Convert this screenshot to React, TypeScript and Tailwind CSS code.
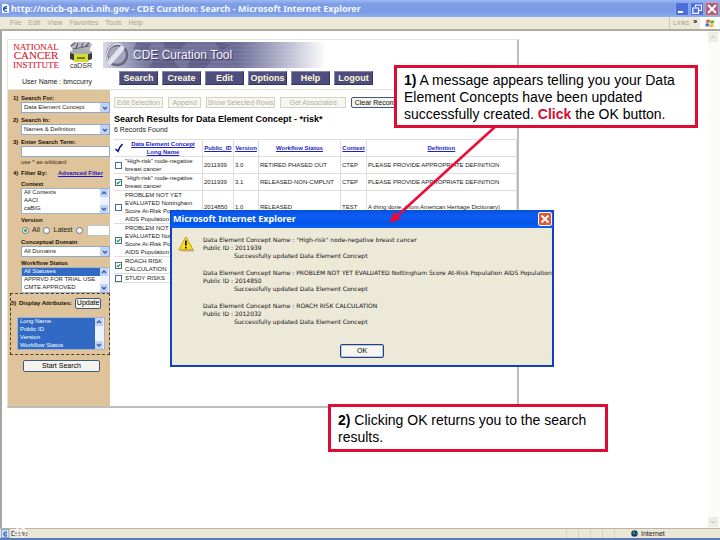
import React from "react";

const sans = "font-['Liberation_Sans',Arial,sans-serif]";
const caption = "font-['Noto_Sans','Open_Sans',sans-serif] font-bold";

function Chevron({ up = false, className = "" }: { up?: boolean; className?: string }) {
  return (
    <svg viewBox="0 0 8 8" className={`size-2 ${className}`} aria-hidden="true">
      <path d={up ? "M2 5 L4 3 L6 5" : "M2 3 L4 5 L6 3"} fill="none" stroke="#3d5a94" strokeWidth="1.4" />
    </svg>
  );
}

function DropDown({ id, value }: { id: string; value: string }) {
  return (
    <div className="flex h-[11px] border border-[#8fa9c8] bg-white">
      <select id={id} className="min-w-0 flex-1 appearance-none bg-white pl-0.5 text-[6px] leading-[9px] text-[#222]">
        <option>{value}</option>
      </select>
      <span className="flex w-[9px] items-center justify-center bg-[#c1d3fb]">
        <Chevron />
      </span>
    </div>
  );
}

function ListBox({
  id,
  label,
  items,
  selected,
  className,
}: {
  id: string;
  label?: string;
  items: string[];
  selected: string[];
  className: string;
}) {
  return (
    <div className={`flex border border-[#9fb4cc] bg-white ${className}`}>
      <select
        id={id}
        aria-label={label}
        multiple
        defaultValue={selected}
        className="h-full min-w-0 flex-1 appearance-none overflow-hidden bg-white text-[6px] text-[#222]"
      >
        {items.map((item) => (
          <option
            key={item}
            className="h-[8px] min-h-0 p-0 pl-0.5 leading-[8px] checked:bg-[#316ac5] checked:bg-[linear-gradient(#316ac5,#316ac5)] checked:text-white"
          >
            {item}
          </option>
        ))}
      </select>
      <span className="flex w-[9px] flex-col justify-between bg-[#eef2fb]">
        <Chevron up className="bg-[#c1d3fb]" />
        <Chevron className="bg-[#c1d3fb]" />
      </span>
    </div>
  );
}

function Label({ n, htmlFor, children }: { n?: string; htmlFor?: string; children: React.ReactNode }) {
  return (
    <div className="flex h-[8px] text-[6px] leading-[8px] font-bold text-[#1a1206]">
      <span className="w-[8px] shrink-0">{n}</span>
      <label htmlFor={htmlFor}>{children}</label>
    </div>
  );
}

function Radio({ label, checked }: { label: string; checked?: boolean }) {
  return (
    <label className="flex items-center gap-[3px]">
      <input
        type="radio"
        name="version"
        aria-label={label || "Specific version"}
        defaultChecked={checked}
        className="size-[7px] appearance-none rounded-full border border-[#5b7390] bg-white checked:bg-[radial-gradient(circle,#2da32d_35%,#fff_45%)]"
      />
      {label}
    </label>
  );
}

function Sidebar() {
  return (
    <aside className="w-[102px] shrink-0 bg-[#dfc49b] pt-[4px] pb-[34px]">
      <div className="pl-[5px]">
        <Label n="1)" htmlFor="searchFor">Search For:</Label>
        <div className="pl-[8px]"><DropDown id="searchFor" value="Data Element Concept" /></div>
        <div className="h-[3px]" />
        <Label n="2)" htmlFor="searchIn">Search In:</Label>
        <div className="pl-[8px]"><DropDown id="searchIn" value="Names & Definition" /></div>
        <div className="h-[3px]" />
        <Label n="3)" htmlFor="term">Enter Search Term:</Label>
        <div className="pl-[8px]">
          <input id="term" type="text" className="block h-[11px] w-full border border-[#8fa9c8] bg-white text-[6px]" />
          <p className="mt-px text-[6px] leading-[8px] text-[#3a2c14]">use * as wildcard</p>
        </div>
        <div className="mt-[3px] flex justify-between pr-[7px]">
          <Label n="4)">Filter By:</Label>
          <a href="#advanced" className="text-[6px] leading-[8px] font-bold text-[#1818c8] underline">Advanced Filter</a>
        </div>
        <div className="h-[3px]" />
        <Label htmlFor="context">Context</Label>
        <div className="pl-[8px]">
          <ListBox id="context" items={["All Contexts", "AACI", "caBIG"]} selected={[]} className="h-[26px]" />
        </div>
        <div className="h-[2px]" />
        <Label>Version</Label>
        <div className="flex h-[12px] items-center justify-between pl-[9px] text-[7px] leading-[8px] text-[#222]">
          <Radio label="All" checked />
          <Radio label="Latest" />
          <Radio label="" />
          <input type="text" aria-label="Version number" className="h-[11px] w-[23px] border border-[#b9c4cf] bg-white text-[6px]" />
        </div>
        <div className="h-[2px]" />
        <Label htmlFor="domain">Conceptual Domain</Label>
        <div className="pl-[8px]"><DropDown id="domain" value="All Domains" /></div>
        <div className="h-[2px]" />
        <Label htmlFor="status">Workflow Status</Label>
        <div className="pl-[8px]">
          <ListBox
            id="status"
            items={["All Statuses", "APPRVD FOR TRIAL USE", "CMTE APPROVED"]}
            selected={["All Statuses"]}
            className="h-[26px]"
          />
        </div>
      </div>
      <div className="ml-[2px] border border-dashed border-[#4a3d28] pt-[3px] pb-[4px]">
        <div className="flex h-[12px] items-center gap-[3px]">
          <Label n="5)" htmlFor="attributes">Display Attributes:</Label>
          <button type="button" className="h-[11px] w-[26px] rounded-xs border border-[#40587c] bg-[#f4f3ee] text-[7px] leading-[8px]">
            Update
          </button>
        </div>
        <div className="mt-[8px] pr-[4px] pl-[6px]">
          <ListBox
            id="attributes"
            items={["Long Name", "Public ID", "Version", "Workflow Status"]}
            selected={["Long Name", "Public ID", "Version", "Workflow Status"]}
            className="h-[33px]"
          />
        </div>
      </div>
      <button
        type="button"
        className="mt-[5px] ml-[15px] block h-[12px] w-[77px] rounded-xs border border-[#40587c] bg-[#f4f3ee] text-[7px] leading-[8px]"
      >
        Start Search
      </button>
    </aside>
  );
}

const problem = "PROBLEM NOT YET EVALUATED Nottingham Score At-Risk Population AIDS Population";
const define = "PLEASE PROVIDE APPROPRIATE DEFINITION";
const rows = [
  { on: false, name: '"High-risk" node-negative breast cancer', id: "2011939", v: "3.0", status: "RETIRED PHASED OUT", ctx: "CTEP", def: define },
  { on: true, name: '"High-risk" node-negative breast cancer', id: "2011939", v: "3.1", status: "RELEASED-NON-CMPLNT", ctx: "CTEP", def: define },
  { on: false, name: problem, id: "2014850", v: "1.0", status: "RELEASED", ctx: "TEST", def: "A thing done. (from American Heritage Dictionary)" },
  { on: true, name: problem, id: "", v: "", status: "", ctx: "", def: "" },
  { on: true, name: "ROACH RISK CALCULATION", id: "", v: "", status: "", ctx: "", def: "" },
  { on: false, name: "STUDY RISKS", id: "", v: "", status: "", ctx: "", def: "" },
];

function Check({ on, name }: { on: boolean; name: string }) {
  return (
    <span className="relative block size-[7px]">
      <input type="checkbox" aria-label={name} defaultChecked={on} className="block size-[7px] appearance-none border border-[#4a6d96] bg-white" />
      {on && (
        <svg viewBox="0 0 7 7" className="pointer-events-none absolute inset-0 size-[7px]">
          <path d="M1.8 3.4 L3 4.8 L5.3 2.2" fill="none" stroke="#21a121" strokeWidth="1.2" />
        </svg>
      )}
    </span>
  );
}

function Results() {
  const tool = "h-[11px] shrink-0 border border-[#d5d2c4] bg-[#f7f6f1] text-[7px] leading-[8px] text-[#b4b1a4]";
  const cell = "border-r border-b border-[#dedede] p-0 text-left";
  const head = `${cell} text-center! align-middle`;
  const link = "font-bold text-[#1d1dc4] underline";
  return (
    <section className="min-w-0 flex-1 overflow-hidden pt-[7px] pl-[4px]">
      <div className="flex gap-[5px]">
        <button type="button" disabled className={`${tool} w-[49px]`}>Edit Selection</button>
        <button type="button" disabled className={`${tool} w-[33px]`}>Append</button>
        <button type="button" disabled className={`${tool} w-[69px]`}>Show Selected Rows</button>
        <button type="button" disabled className={`${tool} w-[66px]`}>Get Associated</button>
        <button type="button" className="h-[11px] w-[52px] shrink-0 rounded-xs border border-[#40587c] bg-[#f6f5f0] text-[7px] leading-[8px] text-[#111]">
          Clear Records
        </button>
      </div>
      <h1 className="mt-[5px] text-[9px] leading-[12px] font-bold text-black">Search Results for Data Element Concept - *risk*</h1>
      <p className="mt-px text-[7px] leading-[8px] text-[#222]">6 Records Found</p>
      <table className="mt-[5px] w-full table-fixed border-separate border-spacing-0 border-t border-[#dedede] text-[6px] leading-[8px] text-[#222]">
        <colgroup>
          <col className="w-[10px]" />
          <col className="w-[79px]" />
          <col className="w-[31px]" />
          <col className="w-[25px]" />
          <col className="w-[82px]" />
          <col className="w-[26px]" />
          <col />
        </colgroup>
        <thead>
          <tr>
            <th className="border-b border-[#dedede] p-0">
              <svg viewBox="0 0 10 10" className="size-[10px]" role="img" aria-label="Select all">
                <path d="M1.500 6 L4 8.300 Q5 4.500 8.500 1" fill="none" stroke="#10107a" strokeWidth="1.600" />
              </svg>
            </th>
            <th className={head}><a href="#name" className={link}>Data Element Concept<br />Long Name</a></th>
            <th className={head}><a href="#id" className={link}>Public_ID</a></th>
            <th className={head}><a href="#version" className={link}>Version</a></th>
            <th className={head}><a href="#status" className={link}>Workflow Status</a></th>
            <th className={head}><a href="#context" className={link}>Context</a></th>
            <th className={head}><a href="#definition" className={link}>Definition</a></th>
          </tr>
        </thead>
        <tbody>
          {rows.map((r, i) => (
            <tr key={i}>
              <td className="border-b border-[#dedede] p-0 pl-px"><Check on={r.on} name={r.name} /></td>
              <td className={`${cell} pl-px!`}>{r.name}</td>
              <td className={`${cell} pl-px!`}>{r.id}</td>
              <td className={`${cell} pl-px!`}>{r.v}</td>
              <td className={`${cell} pl-px!`}>{r.status}</td>
              <td className={`${cell} pl-px!`}>{r.ctx}</td>
              <td className={`${cell} truncate pl-px!`}>{r.def}</td>
            </tr>
          ))}
        </tbody>
      </table>
    </section>
  );
}

function Logos() {
  return (
    <>
      <svg viewBox="0 0 50 27" className="h-[27px] w-[50px] shrink-0" role="img" aria-label="National Cancer Institute">
        <g fill="#d3202f" stroke="#d3202f" strokeWidth="0.1" fontFamily="Liberation Serif, serif" fontSize="9" textAnchor="middle">
          <text x="26" y="8">NATIONAL</text>
          <text x="26" y="17" fontSize="11">CANCER</text>
          <text x="26" y="26">INSTITUTE</text>
        </g>
      </svg>
      <svg viewBox="0 0 24 27" className="ml-[9px] h-[27px] w-[24px] shrink-0" role="img" aria-label="caDSR">
        <path d="M1 3 L5 0 L21 0 L23 3 L20 9 L4 9Z" fill="#b7b7c4" />
        <path d="M2 4 L6 1 M7 6 L9 1 M12 6 L14 1 M16 5 L20 1 M4 7 L20 4" stroke="#5b5b70" strokeWidth="1.1" />
        <path d="M1 10 V17 Q12 22 23 17 V10Z" fill="#3b3f3c" />
        <ellipse cx="12" cy="10" rx="11" ry="3" fill="#a9b0ab" />
        <rect x="5" y="12" width="14" height="8" fill="#d6d936" />
        <path d="M8 16H16" stroke="#5a5c14" strokeWidth="1.500" />
        <text x="12" y="26" textAnchor="middle" fontFamily="Liberation Sans, sans-serif" fontSize="7" fill="#333">caDSR</text>
      </svg>
    </>
  );
}

function PageHeader() {
  return (
    <header className="border-b border-[#e6e6dc] pt-[2px] pl-[2px]">
      <div className="flex h-[27px]">
        <Logos />
        <div className="relative ml-[10px] flex h-[26px] w-[223px] items-center bg-[linear-gradient(90deg,#d9d9e6_0%,#a9a9c6_8%,#74749c_20%,#6c6c98_60%,#b9b9d0_82%,#ffffff_100%)]">
          <svg viewBox="0 0 223 26" className="absolute inset-0 size-full" aria-hidden="true">
            <path d="M34 0 L48 2 L44 9 L30 7Z M60 0H84L78 7L62 6Z M50 19L70 17L76 26H46Z M88 15L110 18L102 26H84Z M112 0L128 3L118 9Z" fill="#4b4b74" opacity="0.5" />
            <path d="M0 4H223M0 8H223M0 12H223M0 16H223M0 20H223M0 24H223" stroke="#fff" strokeWidth="0.7" opacity="0.15" />
            <circle cx="14" cy="13" r="10" fill="#a5a5bd" stroke="#66667e" strokeWidth="2.400" />
            <path d="M7 20 L19 6" stroke="#e4e4f0" strokeWidth="5" strokeLinecap="round" />
            <path d="M19 3 A11 11 0 0 0 5 18" fill="none" stroke="#ececf4" strokeWidth="1.200" />
          </svg>
          <span className="relative pl-[30px] text-[12px] leading-[14px] text-[#f4f3ff] [text-shadow:1px_1px_1px_#33335c]">CDE Curation Tool</span>
        </div>
      </div>
      <div className="flex h-[20px] items-start pt-[2px]">
        <p className="w-[109px] shrink-0 pt-[7px] pl-[12px] text-[7px] leading-[8px] text-[#222]">User Name : bmccurry</p>
        <nav className="flex gap-[4px]">
          {["Search", "Create", "Edit", "Options", "Help", "Logout"].map((t) => (
            <button
              key={t}
              type="button"
              className="h-[14px] w-[39px] border border-t-[#8484ae] border-r-[#33335e] border-b-[#33335e] border-l-[#8484ae] bg-[#4d4d80] text-[9px] leading-[11px] font-bold text-[#fdf9d6]"
            >
              {t}
            </button>
          ))}
        </nav>
      </div>
    </header>
  );
}

const messages = [
  ['"High-risk" node-negative breast cancer', "2011939"],
  ["PROBLEM NOT YET EVALUATED Nottingham Score At-Risk Population AIDS Population", "2014850"],
  ["ROACH RISK CALCULATION", "2012032"],
];

function Dialog() {
  return (
    <div role="dialog" aria-label="Microsoft Internet Explorer" className="absolute top-[210px] left-[170px] w-[384px] border-2 border-t-0 border-[#1440c0] bg-[#ece9d8]">
      <div className="-mx-px flex h-[18px] items-center justify-between bg-[linear-gradient(#0a50d8,#0a5df4_30%,#0554e8_75%,#0a62fa)] pr-px pl-[2px]">
        <span className={`${caption} text-[9px] leading-[12px] text-white`}>Microsoft Internet Explorer</span>
        <button type="button" aria-label="Close" className="flex size-[14px] items-center justify-center rounded-xs border border-white bg-[#dd5a3c]">
          <svg viewBox="0 0 10 10" className="size-[10px]"><path d="M1.500 1.500 L8.500 8.500 M8.500 1.500 L1.500 8.500" stroke="#fff" strokeWidth="1.800" /></svg>
        </button>
      </div>
      <div className="flex gap-[8px] pt-[8px] pl-[6px]">
        <svg viewBox="0 0 17 16" className="h-[16px] w-[17px] shrink-0" aria-hidden="true">
          <path d="M8 1 L15.500 14.500 H1Z" fill="#8a8460" opacity="0.5" transform="translate(1 1)" />
          <path d="M7.800 0.800 L15 13.800 H0.800Z" fill="#ffe018" stroke="#c89a10" strokeWidth="0.900" strokeLinejoin="round" />
          <path d="M7.900 4.500 V9.500 M7.900 10.800 V12.400" stroke="#111" strokeWidth="1.700" />
        </svg>
        <div className="flex flex-col gap-[9px] font-['DejaVu_Sans',sans-serif] text-[6px] leading-[8px] whitespace-nowrap text-[#111]">
          {messages.map(([name, id]) => (
            <div key={id}>
              <p>Data Element Concept Name : {name}</p>
              <p>Public ID : {id}</p>
              <p className="pl-[31px]">Successfully updated Data Element Concept</p>
            </div>
          ))}
        </div>
      </div>
      <div className="flex justify-center pt-[18px] pb-[7px]">
        <button type="button" className="h-[14px] w-[44px] rounded-xs border border-[#24407c] bg-[#f6f5ef] text-[7px] leading-[10px] shadow-[inset_0_0_0_1px_#b4c8ee]">OK</button>
      </div>
    </div>
  );
}

function TitleBar() {
  const b = "flex size-[14px] items-center justify-center rounded-xs border";
  return (
    <div className="flex h-[17px] items-center bg-[linear-gradient(#9db8f0,#7c9ce6_25%,#7b9be6_75%,#8fb0f2)] pr-px pl-px">
      <svg viewBox="0 0 9 12" className="h-[12px] w-[9px]" aria-hidden="true">
        <path d="M1 1H6L8 3V10H1Z" fill="#fff" />
        <path d="M2 5.500H6 M6 4 A2.300 2.300 0 1 0 6 8" fill="none" stroke="#1f4fae" strokeWidth="1.300" />
      </svg>
      <span className={`${caption} min-w-0 flex-1 truncate pl-px text-[9px] leading-[14px] text-[#f4f7ff]`}>
        http://ncicb-qa.nci.nih.gov - CDE Curation: Search - Microsoft Internet Explorer
      </span>
      <div className="flex gap-px">
        <button type="button" aria-label="Minimize" className={`${b} border-[#8fa9ee] bg-[#4a6fdc]`}>
          <svg viewBox="0 0 10 10" className="size-[10px]"><path d="M1 8H6" stroke="#fff" strokeWidth="2" /></svg>
        </button>
        <button type="button" aria-label="Restore" className={`${b} border-[#8fa9ee] bg-[#4a6fdc]`}>
          <svg viewBox="0 0 10 10" className="size-[10px]"><path d="M3.500 3V1H9.500V6.500H7 M0.800 4H6.500V9.300H0.800Z" fill="none" stroke="#fff" strokeWidth="1.200" /></svg>
        </button>
        <button type="button" aria-label="Close" className={`${b} border-[#c9a5b8] bg-[#b0607c]`}>
          <svg viewBox="0 0 10 10" className="size-[10px]"><path d="M1 1 L9 9 M9 1 L1 9" stroke="#fff" strokeWidth="1.800" /></svg>
        </button>
      </div>
    </div>
  );
}

function MenuBar() {
  return (
    <div className="flex h-[14px] items-stretch border-b-2 border-[#b0ac9c] bg-[#ece9d8] text-[#aaa796]">
      <nav className="flex flex-1 items-center gap-[7px] pl-[10px] text-[7px] leading-[10px]">
        {["File", "Edit", "View", "Favorites", "Tools", "Help"].map((m) => (
          <button key={m} type="button">{m}</button>
        ))}
      </nav>
      <div className="flex w-[31px] items-center gap-[4px] border-l border-[#cbc8b8] pl-[3px] text-[7px] leading-[10px]">
        Links <span className="pb-[3px] font-bold text-black">»</span>
      </div>
      <div className="flex w-[20px] items-center justify-center bg-white">
        <svg viewBox="0 0 10 9" className="h-[9px] w-[10px]" aria-hidden="true">
          <path d="M1.500 1 Q3 0 5 1 L4.400 4 Q2.500 3.200 0.900 4Z" fill="#e8592b" />
          <path d="M5.500 1.200 Q7.500 2 9.500 1.200 L8.900 4.200 Q7 5 4.900 4.200Z" fill="#6cb33e" />
          <path d="M0.800 4.600 Q2.500 3.800 4.300 4.700 L3.700 7.700 Q2 6.900 0.200 7.700Z" fill="#3a78d8" />
          <path d="M4.800 4.900 Q6.800 5.800 8.800 4.900 L8.200 7.900 Q6.200 8.700 4.200 7.900Z" fill="#f2b826" />
        </svg>
      </div>
    </div>
  );
}

function StatusBar() {
  return (
    <footer className="relative flex h-[12px] items-center border-t border-b-2 border-t-[#b9b5a4] border-b-[#5a7cb4] bg-[#ece6d6] text-[7px] leading-[8px] text-[#222]">
      <svg viewBox="0 0 9 9" className="ml-px size-[9px]" aria-hidden="true">
        <rect x="0.500" y="0.500" width="7.500" height="8" fill="#d8e6fa" stroke="#6e95d0" strokeWidth="0.800" />
        <path d="M2 5H6 M6 3.500 A2 2 0 1 0 6 6.500" fill="none" stroke="#2f67c4" strokeWidth="1.200" />
      </svg>
      <span className="flex-1 pl-px">Done</span>
      <span className="absolute bottom-[-2px] left-[13px] text-[12px] leading-[14px] text-white">40</span>
      <div className="flex h-full">
        {[0, 1, 2, 3, 4].map((i) => (
          <span key={i} className="w-[12px] border-l border-[#dad4c2]" />
        ))}
      </div>
      <div className="flex w-[94px] items-center gap-[3px] pl-[5px]">
        <svg viewBox="0 0 8 8" className="size-[7px]" aria-hidden="true">
          <circle cx="4" cy="4" r="3.700" fill="#123a6e" />
          <path d="M2 2 L4 1.500 L4.500 4 L3 5.500Z M5.500 3.500 L7 4 L6 6Z" fill="#45a558" />
        </svg>
        Internet
      </div>
    </footer>
  );
}

export default function App() {
  const callout = "absolute border-[3px] border-[#e00b34] bg-white px-[7px] text-[14px] leading-[17px] text-black";
  return (
    <div className={`relative flex min-h-screen flex-col overflow-hidden bg-white ${sans}`}>
      <TitleBar />
      <MenuBar />
      <div className="flex flex-1 border-l-2 border-[#a5a5a0]">
        <main className="flex-1 pt-[8px] pl-[5px]">
          <div className="w-[73%] border-t border-r-2 border-b-2 border-l border-t-[#e4e4d8] border-r-[#bdbdbd] border-b-[#bdbdbd] border-l-[#e4e4d8]">
            <PageHeader />
            <div className="flex">
              <Sidebar />
              <Results />
            </div>
          </div>
        </main>
        <div className="flex w-[12px] flex-col justify-between bg-[#fbfbf8] py-px" aria-hidden="true">
          <svg viewBox="0 0 10 10" className="size-[10px] bg-[#eeede5]"><path d="M3 6 L5 4 L7 6" fill="none" stroke="#c4c2b6" /></svg>
          <svg viewBox="0 0 10 10" className="size-[10px] bg-[#eeede5]"><path d="M3 4 L5 6 L7 4" fill="none" stroke="#c4c2b6" /></svg>
        </div>
      </div>
      <StatusBar />

      <Dialog />
      <svg viewBox="0 0 110 100" className="absolute top-[125px] left-[388px] h-[100px] w-[110px]" aria-hidden="true">
        <path d="M108 1 L9 91" stroke="#ee0a36" strokeWidth="2.500" />
        <path d="M1 98 L6 87 L13 94Z" fill="#ee0a36" />
      </svg>
      <div className={`${callout} top-[65px] left-[394px] w-[304px] pt-[4px] pb-[2px]`}>
        <b>1)</b> A message appears telling you your Data Element Concepts have been updated successfully created.{" "}
        <b className="text-[#d80b34]">Click</b> the OK button.
      </div>
      <div className={`${callout} top-[404px] left-[328px] w-[280px] pt-[5px] pb-[3px]`}>
        <b>2)</b> Clicking OK returns you to the search results.
      </div>
    </div>
  );
}
